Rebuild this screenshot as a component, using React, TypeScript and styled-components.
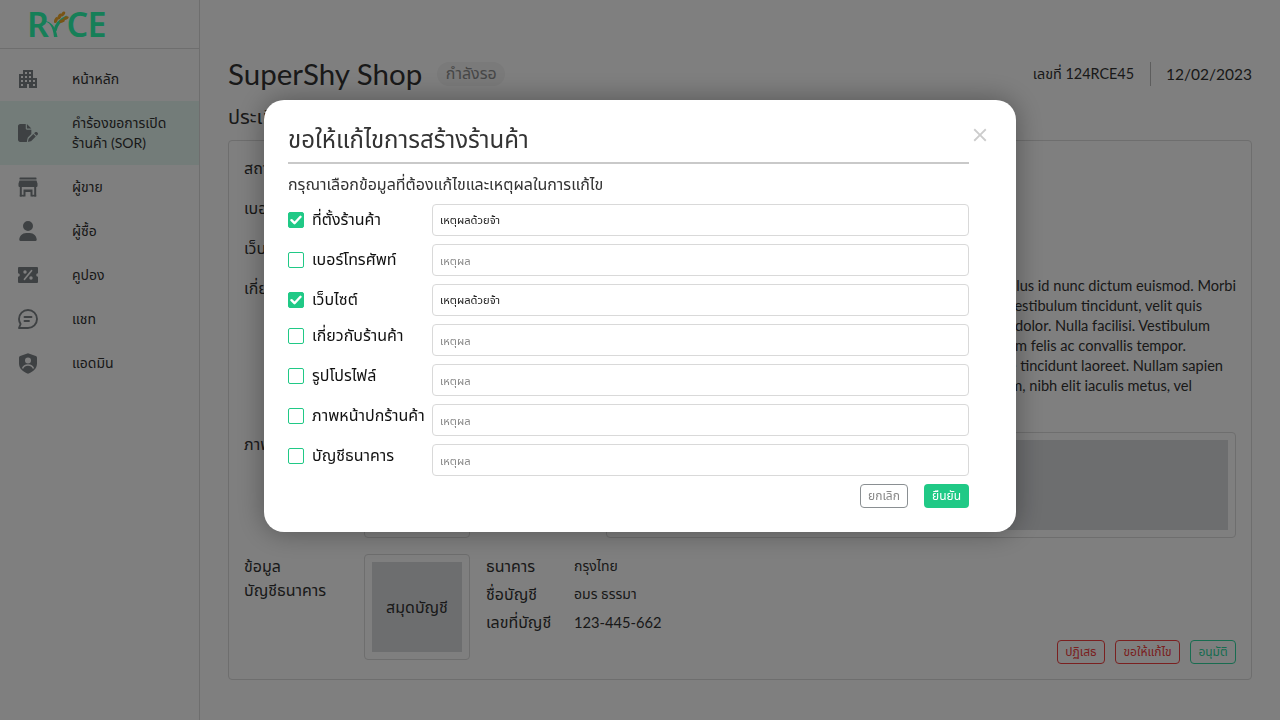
import React from "react";
import styled, { createGlobalStyle } from "styled-components";
import { MdApartment, MdClose } from "react-icons/md";
import { FaFilePen, FaUser } from "react-icons/fa6";

const STACK = `Lato, "Noto Sans Thai", "Noto Sans", sans-serif`;

const Global = createGlobalStyle`
  html, body { margin: 0; padding: 0; width: 1280px; height: 720px; overflow: hidden; background: #fff; }
  body { font-family: ${STACK}; color: #333; }
  * { box-sizing: border-box; }
`;

const Page = styled.div`display: flex; width: 1280px; height: 720px;`;
const Sidebar = styled.aside`width: 200px; flex: none; border-right: 1px solid #dcdcdc; background: #fff;`;
const LogoBar = styled.div`height: 49px; border-bottom: 1px solid #dcdcdc; padding-left: 27px; display: flex; align-items: center;`;
const Logo = styled.div`display: flex; align-items: center; color: #2cffb0; font-family: "Noto Sans", sans-serif; font-size: 34px; line-height: 1; font-weight: 600; height: 26px; margin-top: -1px; letter-spacing: -0.5px;`;
const StalkSvg = styled.svg`margin: 0 -3px 0 -5px; flex: none;`;
const Nav = styled.nav`padding-top: 8px; display: flex; flex-direction: column;`;
const NavItem = styled.div<{ $active?: boolean }>`
  display: flex; align-items: center; height: ${p => (p.$active ? 64 : 44)}px; padding-left: 16px; gap: 32px;
  background: ${p => (p.$active ? "#e6f8f3" : "transparent")};
  font-size: 14px; line-height: 20px; color: #333;
`;
const IconSlot = styled.span`width: 24px; height: 24px; flex: none; display: flex; align-items: center; justify-content: center; color: #7d8387;`;
const Main = styled.main`flex: 1; padding: 62px 28px 0; min-width: 0;`;
const TitleRow = styled.div`display: flex; align-items: center; height: 24px;`;
const Title = styled.h1`margin: 0; font-size: 29.5px; font-weight: 400; color: #333; line-height: 24px;`;
const Chip = styled.span`margin-left: 15px; width: 68px; height: 24px; border-radius: 12px; background: #f4f4f4; color: #8f8f8f; font-size: 16px; display: flex; align-items: center; justify-content: center;`;
const Meta = styled.div`margin-left: auto; display: flex; align-items: center; height: 24px;`;
const MetaNo = styled.span`font-size: 14.4px; padding-right: 16px; border-right: 1px solid #bbb; line-height: 24px; color: #333;`;
const MetaDate = styled.span`font-size: 15.5px; padding-left: 15px; color: #333;`;
const Section = styled.h2`margin: 16px 0 10px; font-size: 20px; font-weight: 400; line-height: 28px; color: #333;`;
const Card = styled.section`height: 540px; border: 1px solid #dcdcdc; border-radius: 4px; padding: 15px; display: flex; flex-direction: column; gap: 16px;`;
const Row = styled.div`display: flex; font-size: 16px; line-height: 24px; color: #333;`;
const Label = styled.div`width: 120px; flex: none;`;
const About = styled.div`flex: 1; font-size: 14.6px; line-height: 20px; height: 140px;`;
const AboutLine = styled.div<{ $right: number }>`white-space: nowrap; text-align: right; padding-right: ${p => p.$right}px; overflow: hidden; height: 20px;`;
const Frame = styled.div`border: 1px solid #dcdcdc; border-radius: 4px; padding: 7px; height: 106px;`;
const Thumb = styled(Frame)`width: 106px; flex: none;`;
const Cover = styled(Frame)`flex: 1; margin-left: 136px;`;
const Fill = styled.div`height: 90px; background: #dadcdf; display: flex; align-items: center; justify-content: center; color: #333;`;
const BankRow = styled(Row)`height: 110px;`;
const BankInfo = styled.div`margin-left: 16px; display: grid; grid-template-columns: 88px auto; grid-auto-rows: 28px; align-items: center; align-content: start; line-height: 24px; margin-top: -2px;`;
const BankValue = styled.span<{ $num?: boolean }>`font-size: ${p => (p.$num ? 14.7 : 14)}px;`;
const Actions = styled.div`margin-left: auto; align-self: flex-end; display: flex; gap: 10px;`;
const OutlineBtn = styled.button<{ $c: string; $w: number }>`
  width: ${p => p.$w}px; height: 24px; border: 1px solid ${p => p.$c}; border-radius: 4px; background: transparent;
  color: ${p => p.$c}; font: 12px ${STACK}; padding: 0; display: flex; align-items: center; justify-content: center;
`;

const Overlay = styled.div`position: fixed; inset: 0; background: rgba(0,0,0,.5); display: flex; align-items: flex-start; justify-content: center; padding-top: 100px;`;
const Modal = styled.div`position: relative; width: 752px; height: 432px; background: #fff; border-radius: 20px; padding: 24px 47px 0 24px; box-shadow: 0 0 28px rgba(0,0,0,.35); color: #333;`;
const Close = styled.span`position: absolute; top: 24px; right: 25px; color: #ccc; display: flex;`;
const ModalTitle = styled.h3`margin: 0; height: 40px; border-bottom: 2px solid #c9c9c9; font-size: 24px; font-weight: 400; line-height: 30px; color: #333;`;
const Sub = styled.p`margin: 0; font-size: 16px; line-height: 24px; padding-top: 8px; height: 40px;`;
const Rows = styled.div`display: flex; flex-direction: column; gap: 8px;`;
const FieldRow = styled.div`display: flex; height: 32px; align-items: center;`;
const CheckWrap = styled.label<{ $up?: boolean }>`width: 144px; flex: none; display: flex; align-items: center; gap: 8px; font-size: 16px; color: #111; white-space: nowrap; ${p => (p.$up ? "margin-top: -8px;" : "")}`;
const Box = styled.span<{ $on?: boolean }>`width: 16px; height: 16px; flex: none; border-radius: 2px; border: 1px solid #20c986; background: ${p => (p.$on ? "#20c986" : "#fff")}; color: #fff; display: flex; align-items: center; justify-content: center;`;
const Input = styled.input`flex: 1; height: 32px; min-width: 0; border: 1px solid #d9d9d9; border-radius: 4px; padding: 0 7px; font: 11.2px ${STACK}; color: #222; outline: none; &::placeholder { color: #888; }`;
const ModalActions = styled.div`display: flex; justify-content: flex-end; gap: 16px; margin-top: 8px;`;
const Cancel = styled.button`width: 48px; height: 24px; border: 1px solid #8a8f92; border-radius: 4px; background: #fff; color: #888; font: 12px ${STACK}; padding: 0;`;
const Confirm = styled.button`width: 45px; height: 24px; border: 0; border-radius: 4px; background: #20c986; color: #fff; font: 12px ${STACK}; padding: 0;`;

const Tick = () => (
  <svg width="12" height="10" viewBox="0 0 12 10" fill="none" stroke="currentColor" strokeWidth="2.4" strokeLinecap="round" strokeLinejoin="round">
    <path d="M1.5 5.2 4.5 8.2 10.5 1.8" />
  </svg>
);

const Store = () => (
  <svg width="20" height="20" viewBox="0 0 20 20" fill="currentColor">
    <rect x="1.5" y="0.5" width="17" height="2" rx="0.6" />
    <path d="M1.5 3.5h17l1 3v2.6a1 1 0 0 1-1 .9H1.5a1 1 0 0 1-1-.9V6.500z" />
    <rect x="1.8" y="10" width="2" height="9.5" />
    <rect x="16.2" y="10" width="2" height="9.5" />
    <rect x="1.8" y="17.8" width="4.4" height="1.7" />
    <rect x="13.8" y="17.8" width="4.4" height="1.7" />
    <path d="M5.5 12.5h9v7h-2v-4.5h-5v4.5h-2z" />
  </svg>
);

const Coupon = () => (
  <svg width="20" height="16" viewBox="0 0 20 16">
    <path fill="currentColor" d="M1 0h18a1 1 0 0 1 1 1v5.200a1.800 1.800 0 0 0 0 3.600V15a1 1 0 0 1-1 1H1a1 1 0 0 1-1-1V9.800a1.800 1.800 0 0 0 0-3.600V1a1 1 0 0 1 1-1z" />
    <path stroke="#fff" strokeWidth="1.7" strokeLinecap="round" d="M6.5 12.300 13.500 3.700" />
    <circle cx="7" cy="5" r="1.7" fill="#fff" />
    <circle cx="13" cy="11" r="1.7" fill="#fff" />
  </svg>
);

const Chat = () => (
  <svg width="20" height="20" viewBox="0 0 20 20" fill="none" stroke="currentColor" strokeWidth="1.9" strokeLinecap="round" strokeLinejoin="round">
    <path d="M10 1C5 1 1 5 1 10c0 2 .6 3.600 1.600 5L1 19h9c5 0 9-4 9-9s-4-9-9-9z" />
    <path d="M6.500 8h7M6.500 12h4.500" />
  </svg>
);

const Shield = () => (
  <svg width="18" height="21" viewBox="0 0 18 21">
    <path fill="currentColor" d="M9 .3 16.800 3c.7.3 1.200.9 1.200 1.700V10.500c0 5-4 8.500-9 10.200C4 19 0 15.500 0 10.500V4.700c0-.8.5-1.400 1.200-1.700z" />
    <circle cx="9" cy="7.500" r="3" fill="#fff" />
    <path fill="none" stroke="#fff" strokeWidth="1.5" d="M3.500 15.500c1-2.500 3-3.500 5.500-3.500s4.500 1 5.500 3.500" />
  </svg>
);

const Stalk = () => (
  <StalkSvg width="26" height="26" viewBox="0 0 26 26">
    <path d="M1 10c5 1 9 5 10 16h3.500C13 16 8 10 1 10z" fill="#2cffb0" />
    <path d="M12 20C13 13 17 9 24 6" fill="none" stroke="#2cffb0" strokeWidth="3" />
    <g fill="#f0a82a">
      <ellipse cx="13" cy="9" rx="1.700" ry="3.200" transform="rotate(20 13 9)" />
      <ellipse cx="16.500" cy="5.500" rx="1.700" ry="3.200" transform="rotate(25 16.500 5.500)" />
      <ellipse cx="20" cy="3" rx="1.600" ry="2.800" transform="rotate(40 20 3)" />
      <ellipse cx="19" cy="10" rx="1.600" ry="3" transform="rotate(70 19 10)" />
      <ellipse cx="23" cy="7" rx="1.500" ry="2.800" transform="rotate(70 23 7)" />
    </g>
  </StalkSvg>
);

const nav: { icon: React.ReactNode; label: React.ReactNode; active?: boolean }[] = [
  { icon: <MdApartment size={24} />, label: "หน้าหลัก" },
  { icon: <FaFilePen size={20} />, label: <>คำร้องขอการเปิด<br />ร้านค้า (SOR)</>, active: true },
  { icon: <Store />, label: "ผู้ขาย" },
  { icon: <FaUser size={20} />, label: "ผู้ซื้อ" },
  { icon: <Coupon />, label: "คูปอง" },
  { icon: <Chat />, label: "แชท" },
  { icon: <Shield />, label: "แอดมิน" },
];

const about: [string, number][] = [
  ["Lorem ipsum dolor sit amet, consectetur adipiscing elit. Sed vitae phasellus id nunc dictum euismod. Morbi", 0],
  ["Integer at sapien ut massa aliquet vulputate. Proin sed vestibulum tincidunt, velit quis", 34],
  ["Donec non arcu sed nibh pretium lacinia at vitae dolor. Nulla facilisi. Vestibulum", 26],
  ["Aliquam erat volutpat, pharetra sed diam felis ac convallis tempor.", 50],
  ["Sed pulvinar magna at ante tincidunt laoreet. Nullam sapien", 13],
  ["Curabitur vel dictum enim, nibh elit iaculis metus, vel", 44],
];

const fields: { label: string; value?: string; up?: boolean }[] = [
  { label: "ที่ตั้งร้านค้า", value: "เหตุผลด้วยจ้า" },
  { label: "เบอร์โทรศัพท์" },
  { label: "เว็บไซต์", value: "เหตุผลด้วยจ้า" },
  { label: "เกี่ยวกับร้านค้า", up: true },
  { label: "รูปโปรไฟล์", up: true },
  { label: "ภาพหน้าปกร้านค้า", up: true },
  { label: "บัญชีธนาคาร", up: true },
];

export default function App() {
  return (
    <>
      <Global />
      <Page>
        <Sidebar>
          <LogoBar>
            <Logo>R<Stalk />CE</Logo>
          </LogoBar>
          <Nav>
            {nav.map((n, i) => (
              <NavItem key={i} $active={n.active}>
                <IconSlot>{n.icon}</IconSlot>
                <span>{n.label}</span>
              </NavItem>
            ))}
          </Nav>
        </Sidebar>
        <Main>
          <TitleRow>
            <Title>SuperShy Shop</Title>
            <Chip>กำลังรอ</Chip>
            <Meta>
              <MetaNo>เลขที่ 124RCE45</MetaNo>
              <MetaDate>12/02/2023</MetaDate>
            </Meta>
          </TitleRow>
          <Section>ประเมินร้านค้า</Section>
          <Card>
            <Row><Label>สถานะ</Label>เปิดร้าน</Row>
            <Row><Label>เบอร์โทรศัพท์</Label>081-234-5678</Row>
            <Row><Label>เว็บไซต์</Label>supershy.com</Row>
            <Row>
              <Label>เกี่ยวกับร้านค้า</Label>
              <About>
                {about.map(([t, r]) => <AboutLine key={t} $right={r}>{t}</AboutLine>)}
              </About>
            </Row>
            <Row>
              <Label>ภาพโปรไฟล์</Label>
              <Thumb><Fill>โปรไฟล์</Fill></Thumb>
              <Cover><Fill>หน้าปก</Fill></Cover>
            </Row>
            <BankRow>
              <Label>ข้อมูล<br />บัญชีธนาคาร</Label>
              <Thumb><Fill>สมุดบัญชี</Fill></Thumb>
              <BankInfo>
                <span>ธนาคาร</span><BankValue>กรุงไทย</BankValue>
                <span>ชื่อบัญชี</span><BankValue>อมร ธรรมา</BankValue>
                <span>เลขที่บัญชี</span><BankValue $num>123-445-662</BankValue>
              </BankInfo>
              <Actions>
                <OutlineBtn $c="#f44040" $w={48}>ปฏิเสธ</OutlineBtn>
                <OutlineBtn $c="#f44040" $w={65}>ขอให้แก้ไข</OutlineBtn>
                <OutlineBtn $c="#30d8a0" $w={46}>อนุมัติ</OutlineBtn>
              </Actions>
            </BankRow>
          </Card>
        </Main>
      </Page>
      <Overlay>
        <Modal>
          <Close><MdClose size={22} /></Close>
          <ModalTitle>ขอให้แก้ไขการสร้างร้านค้า</ModalTitle>
          <Sub>กรุณาเลือกข้อมูลที่ต้องแก้ไขและเหตุผลในการแก้ไข</Sub>
          <Rows>
            {fields.map(f => (
              <FieldRow key={f.label}>
                <CheckWrap $up={f.up}>
                  <Box $on={!!f.value}>{f.value ? <Tick /> : null}</Box>
                  {f.label}
                </CheckWrap>
                <Input placeholder="เหตุผล" defaultValue={f.value} />
              </FieldRow>
            ))}
          </Rows>
          <ModalActions>
            <Cancel>ยกเลิก</Cancel>
            <Confirm>ยืนยัน</Confirm>
          </ModalActions>
        </Modal>
      </Overlay>
    </>
  );
}
